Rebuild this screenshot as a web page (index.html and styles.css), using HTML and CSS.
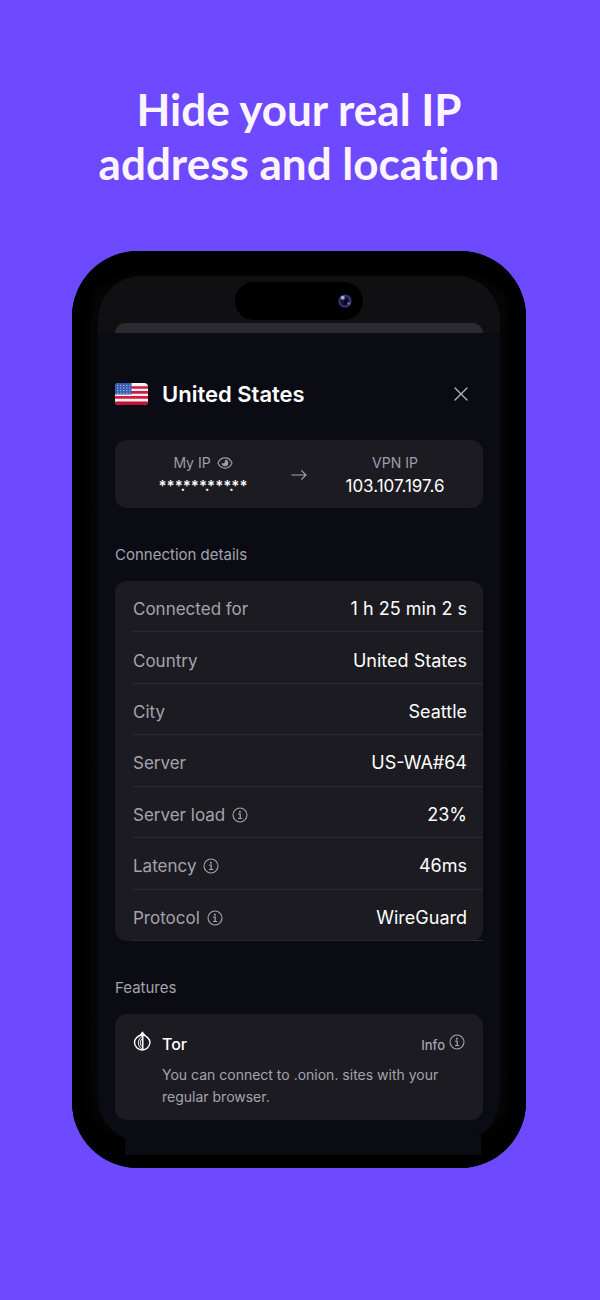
FILE: index.html
```html
<!DOCTYPE html>
<html lang="en">
<head>
<meta charset="utf-8">
<meta name="viewport" content="width=device-width, initial-scale=1">
<title>Hide your real IP address and location</title>
<link rel="stylesheet" href="styles.css">
</head>
<body>
<svg class="defs" aria-hidden="true">
  <symbol id="info" viewBox="0 0 16 16">
    <circle cx="8" cy="8" r="7" fill="none" stroke="currentColor" stroke-width="1.1"/>
    <circle cx="7.9" cy="4.7" r="1" fill="currentColor"/>
    <path d="M6.200 7.200h2v4.300M6 11.500h4.200" fill="none" stroke="currentColor" stroke-width="1.200"/>
  </symbol>
</svg>
<main class="page">
  <h1 class="headline">Hide your real IP<br>address and location</h1>
  <div class="phone">
    <div class="screen">
      <div class="status">
        <div class="island">
          <svg class="camera" viewBox="0 0 14 14" aria-hidden="true">
            <circle cx="7" cy="7" r="6.6" fill="#37347c"/>
            <circle cx="7" cy="7" r="4.6" fill="#15133a"/>
            <circle cx="8" cy="8" r="2.2" fill="#080818"/>
            <circle cx="4.8" cy="3.8" r="2" fill="#a9a8d0"/>
            <circle cx="10.6" cy="9.4" r="1.3" fill="#6f6cb4"/>
          </svg>
        </div>
        <div class="backsheet"></div>
      </div>
      <section class="sheet">
        <header class="title-bar">
          <svg class="flag" viewBox="0 0 33 22" aria-hidden="true">
            <defs><clipPath id="flagclip"><rect width="33" height="22" rx="4"/></clipPath></defs>
            <g clip-path="url(#flagclip)">
              <rect width="33" height="22" fill="#f4f2f6"/>
              <path d="M0 4.500h33M0 9.400h33M0 14.400h33" stroke="#d51a40" stroke-width="2.600"/>
              <path d="M0 20.300h33" stroke="#c40f35" stroke-width="3.600"/>
              <rect width="16.500" height="11.500" fill="#3558b0"/>
              <path d="M2.200 2.400h13M2.200 5h13M2.200 7.600h13M2.200 10.100h13" stroke="#c3d2f0" stroke-width="1" stroke-dasharray="1.200 1.800"/>
            </g>
          </svg>
          <h2 class="title">United States</h2>
          <button class="close" type="button" aria-label="Close">
            <svg viewBox="0 0 14 14" aria-hidden="true"><path d="M1 1l12 12M13 1L1 13" fill="none" stroke="currentColor" stroke-width="1.3" stroke-linecap="round"/></svg>
          </button>
        </header>
        <div class="card ip-card">
          <div class="ip">
            <span class="ip-label">My IP
              <button class="eye" type="button" aria-label="Show my IP">
                <svg viewBox="0 0 16 12" aria-hidden="true">
                  <path d="M1 6C2.4 2.6 5 .9 8 .9S13.600 2.600 15 6C13.600 9.400 11 11.100 8 11.100S2.400 9.400 1 6z" fill="none" stroke="currentColor" stroke-width="1.1"/>
                  <path d="M8 2.700A3.300 3.300 0 1 1 4.700 6L7 6.600Q8.300 6 8 2.700z" fill="currentColor"/>
                </svg>
              </button>
            </span>
            <span class="ip-value ip-masked">***<span class="dot">.</span>***<span class="dot">.</span>***<span class="dot">.</span>**</span>
          </div>
          <svg class="arrow" viewBox="0 0 16 12" aria-hidden="true"><path d="M.5 6H15M10.300 1.300L15 6l-4.700 4.700" fill="none" stroke="currentColor" stroke-width="1.1"/></svg>
          <div class="ip">
            <span class="ip-label">VPN IP</span>
            <span class="ip-value">103.107.197.6</span>
          </div>
        </div>
        <h3 class="section">Connection details</h3>
        <dl class="card details">
          <div class="row"><dt>Connected for</dt><dd>1 h 25 min 2 s</dd></div>
          <div class="row"><dt>Country</dt><dd>United States</dd></div>
          <div class="row"><dt>City</dt><dd>Seattle</dd></div>
          <div class="row"><dt>Server</dt><dd>US-WA#64</dd></div>
          <div class="row"><dt>Server load <button class="info" type="button" aria-label="About server load"><svg aria-hidden="true"><use href="#info"/></svg></button></dt><dd>23%</dd></div>
          <div class="row"><dt>Latency <button class="info" type="button" aria-label="About latency"><svg aria-hidden="true"><use href="#info"/></svg></button></dt><dd>46ms</dd></div>
          <div class="row"><dt>Protocol <button class="info" type="button" aria-label="About protocol"><svg aria-hidden="true"><use href="#info"/></svg></button></dt><dd>WireGuard</dd></div>
        </dl>
        <h3 class="section">Features</h3>
        <article class="card feature">
          <svg class="tor" viewBox="0 0 18 20" aria-hidden="true">
            <path d="M9.500 3C6 4.500 1.500 6.500 1.500 11.300a7.700 7.700 0 0 0 15.400 0C16.900 7.500 13.500 5.500 9.500 3z" fill="none" stroke="currentColor" stroke-width="1.400"/>
            <path d="M9.700 3v15.700" fill="none" stroke="currentColor" stroke-width="1.600"/>
            <path d="M9 5.500C4.200 8.500 4.200 15 8.800 18M8.800 8C6.800 10 6.800 13.500 8.800 15.500" fill="none" stroke="currentColor" stroke-width="1"/>
            <path d="M6 5.300L9.300.300l3.700 4.500z" fill="currentColor"/>
          </svg>
          <div class="feature-body">
            <div class="feature-head">
              <h4 class="feature-name">Tor</h4>
              <button class="info-link" type="button">Info <svg aria-hidden="true"><use href="#info"/></svg></button>
            </div>
            <p class="feature-text">You can connect to .onion. sites with your regular browser.</p>
          </div>
        </article>
      </section>
    </div>
    <div class="screen-foot"></div>
  </div>
</main>
</body>
</html>
```
FILE: styles.css
```css
* { box-sizing: border-box; }

body {
  margin: 0;
  background: #6d4aff;
  font-family: Inter, "Liberation Sans", sans-serif;
  color: #fff;
}

h1, h2, h3, h4, p, dl, dd { margin: 0; }

button {
  display: flex;
  align-items: center;
  padding: 0;
  border: 0;
  background: none;
  color: inherit;
  font: inherit;
}

.defs { display: none; }

.page {
  min-height: 100vh;
  padding: 82px 16px 132px 14px;
}

.headline {
  margin-bottom: 61px;
  font-family: Lato, sans-serif;
  font-size: 44px;
  font-weight: 700;
  font-variant-ligatures: none;
  line-height: 54px;
  text-align: center;
  color: #fcf5ff;
}

.phone {
  max-width: 454px;
  margin: 0 auto;
  padding: 25px 26px 13px;
  border-radius: 66px;
  background: linear-gradient(90deg, #000 10px, #060607 24px, #060607 calc(100% - 24px), #000 calc(100% - 10px));
  box-shadow: inset 0 24px 10px #000, inset 0 -30px 16px #000;
}

.screen {
  overflow: hidden;
  border-radius: 44px;
  background: #0b0b14;
}

.status {
  display: flex;
  flex-direction: column;
  align-items: center;
  padding: 6px 17px 0;
  background: #100f12;
}

.island {
  display: flex;
  align-items: center;
  justify-content: flex-end;
  width: 128px;
  height: 38px;
  padding-right: 11px;
  border-radius: 19px;
  background: #000;
}

.camera { width: 14px; height: 14px; }

.backsheet {
  align-self: stretch;
  height: 10px;
  margin-top: 3px;
  border-radius: 10px 10px 0 0;
  background: #2b2931;
}

.sheet { padding: 46px 17px 22px; }

.title-bar {
  display: flex;
  align-items: center;
  gap: 14px;
  height: 30px;
  margin-bottom: 31px;
}

.flag { width: 33px; height: 22px; }

.title {
  flex: 1;
  font-size: 22px;
  font-weight: 600;
  line-height: 30px;
}

.close {
  margin-right: 15px;
  color: #b9b7c0;
}

.close svg { width: 14px; height: 14px; }

.card {
  border-radius: 12px;
  background: #1c1b21;
}

.ip-card {
  display: grid;
  grid-template-columns: 1fr 16px 1fr;
  align-items: center;
  padding: 12px 0 10px;
}

.ip {
  display: flex;
  flex-direction: column;
  align-items: center;
}

.ip-label {
  display: flex;
  align-items: center;
  gap: 6px;
  font-size: 14px;
  line-height: 22px;
  color: #9f9da8;
}

.eye svg { width: 16px; height: 12px; }

.ip-value {
  font-size: 17px;
  font-weight: 400;
  line-height: 24px;
}

.ip-masked {
  font-size: 15px;
  font-weight: 600;
}

.dot {
  display: inline-flex;
  justify-content: center;
  width: 0;
}

.arrow {
  width: 16px;
  height: 12px;
  color: #a7a4b5;
}

.section {
  margin: 35px 0 15px;
  font-size: 15px;
  font-weight: 400;
  line-height: 23px;
  color: #a5a3ac;
}

.details {
  display: grid;
  grid-auto-rows: 1fr;
  min-height: 360px;
  padding-left: 18px;
}

.row {
  display: flex;
  align-items: center;
  justify-content: space-between;
  padding: 6px 16px 0 0;
  border-bottom: 1px solid #2b2a31;
  font-size: 18px;
  line-height: 24px;
}

.row dt {
  display: flex;
  align-items: center;
  gap: 7px;
  font-size: 17px;
  color: #a5a3ac;
}

.info svg, .info-link svg { width: 16px; height: 16px; }

.feature {
  display: flex;
  gap: 11px;
  padding: 17px 18px 12px;
}

.tor { flex: none; width: 18px; height: 20px; }

.feature-body { flex: 1; }

.feature-head {
  display: flex;
  align-items: center;
  justify-content: space-between;
  margin-bottom: 6px;
}

.feature-name {
  font-size: 16px;
  font-weight: 500;
  line-height: 27px;
}

.info-link {
  gap: 4px;
  font-size: 13px;
  font-weight: 500;
  color: #a5a3ac;
}

.info-link svg { margin-bottom: 6px; }

.feature-text {
  max-width: 290px;
  font-size: 14px;
  line-height: 22px;
  color: #a5a3ac;
}

.screen-foot {
  height: 19px;
  margin: -6px 19px 0 27px;
  background: #0b0b14;
}
```
